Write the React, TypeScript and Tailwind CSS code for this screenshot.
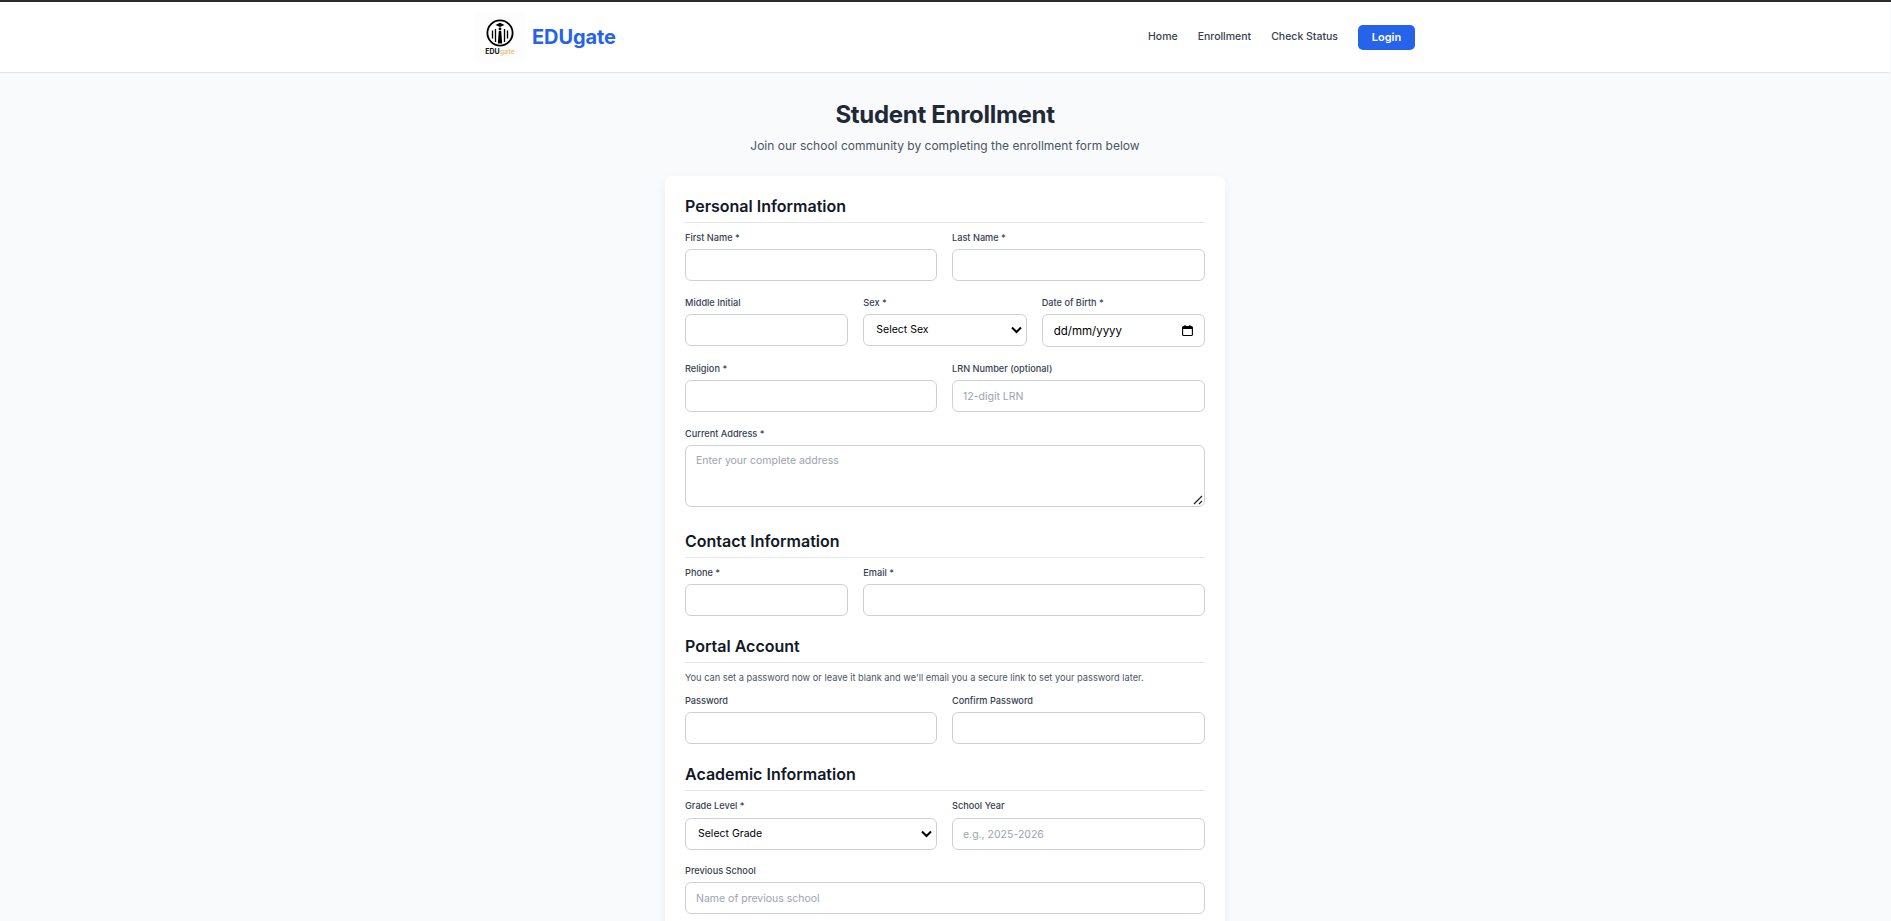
import type { ReactNode } from "react";

const fieldClass =
  "block w-full h-[32px] rounded-[6px] border border-[#cdd0d8] bg-white px-[10px] text-[10.500px] text-black placeholder:text-[#9ca3af] outline-none";

function Logo() {
  return (
    <div className="w-[50px] h-[50px] flex flex-col items-center justify-center bg-[#fdfdfd]">
      <svg width="28" height="28" viewBox="0 0 28 28" fill="none">
        <circle cx="14" cy="14" r="12.600" stroke="#000" strokeWidth="1.800" />
        {/* cap */}
        <path d="M14 3.800 18.500 6 14 8 9.500 6Z" fill="#000" />
        {/* columns and figure */}
        <path d="M6.500 11.500v8M9.500 10v13M18.500 10v13M21.500 11.500v8" stroke="#000" strokeWidth="1.300" />
        <circle cx="14" cy="10" r="1.400" fill="#000" />
        <path d="M12.800 12h2.400l1 12.500h-4.400Z" fill="#000" />
      </svg>
      <div className="mt-[1px] text-[7px] leading-[8px] font-bold text-[#111]">
        EDU<span className="font-semibold text-[#e6c67a]">gate</span>
      </div>
    </div>
  );
}

function NavBar() {
  return (
    <nav className="h-[71px] bg-white border-b border-[#e5e7eb]">
      <div className="w-[940px] h-full mx-auto flex items-center justify-between">
        <div className="flex items-center gap-[7px]">
          <Logo />
          <span className="text-[20px] font-bold tracking-[-0.1px] text-[#2563eb]">EDUgate</span>
        </div>
        <div className="flex items-center gap-[20px] text-[10.500px] font-medium text-[#374151]">
          <a>Home</a>
          <a>Enrollment</a>
          <a>Check Status</a>
          <button className="w-[57px] h-[25px] rounded-[5px] bg-[#2563eb] text-white text-[11px] font-semibold">
            Login
          </button>
        </div>
      </div>
    </nav>
  );
}

function Section({ title, children }: { title: string; children: ReactNode }) {
  return (
    <section className="mb-[18px]">
      <h2 className="h-[29px] pb-[4px] mb-[7px] border-b border-[#e5e7eb] text-[16px] leading-[25px] font-semibold text-[#111827]">
        {title}
      </h2>
      {children}
    </section>
  );
}

function Field({ label, children, className = "" }: { label: string; children: ReactNode; className?: string }) {
  return (
    <div className={className}>
      <label className="block mb-[3px] text-[9.200px] leading-[16px] font-medium text-[#374151]">{label}</label>
      {children}
    </div>
  );
}

function TextField({ label, placeholder, type = "text" }: { label: string; placeholder?: string; type?: string }) {
  return (
    <Field label={label}>
      <input type={type} placeholder={placeholder} className={fieldClass} />
    </Field>
  );
}

function SelectField({ label, option }: { label: string; option: string }) {
  return (
    <Field label={label}>
      <div className="relative">
        <select className={`${fieldClass} appearance-none pl-[12px]`}>
          <option>{option}</option>
        </select>
        <svg
          className="absolute right-[5px] top-[12px] pointer-events-none"
          width="11"
          height="8"
          viewBox="0 0 11 8"
          fill="none"
        >
          <path d="M1 1.500 5.500 6 10 1.500" stroke="#000" strokeWidth="2" />
        </svg>
      </div>
    </Field>
  );
}

function DateField({ label }: { label: string }) {
  return (
    <Field label={label}>
      <div className="relative">
        <input
          type="text"
          defaultValue="dd/mm/yyyy"
          className="block w-full h-[33px] rounded-[6px] border border-[#cdd0d8] bg-white pl-[11px] pr-[10px] text-[11.500px] text-black outline-none"
        />
        <svg
          className="absolute right-[12px] top-[11px] pointer-events-none"
          width="11"
          height="11"
          viewBox="0 0 11 11"
          fill="none"
        >
          <path d="M3 0v2M8 0v2" stroke="#000" strokeWidth="1.100" />
          <rect x=".6" y="1.500" width="9.800" height="9" rx="1" stroke="#000" strokeWidth="1.100" />
          <path d="M1 2h9v2H1Z" fill="#000" />
        </svg>
      </div>
    </Field>
  );
}

export default function App() {
  return (
    <div className="h-screen overflow-hidden pr-[1px] bg-[#f8fafc] border-t-2 border-[#2b2b30] font-['Inter',sans-serif]">
      <NavBar />
      <main className="pt-[26px]">
        <h1 className="text-center text-[24px] leading-[32px] font-bold tracking-[-0.3px] text-[#1f2937]">
          Student Enrollment
        </h1>
        <p className="mt-[5px] mb-[20px] text-center text-[12px] leading-[20px] text-[#4b5563]">
          Join our school community by completing the enrollment form below
        </p>

        <form className="w-[560px] mx-auto bg-white rounded-[8px] shadow-[0_4px_12px_rgba(0,0,0,0.05)] px-[20px] pt-[18px] pb-[20px]">
          <Section title="Personal Information">
            <div className="grid grid-cols-[252px_1fr] gap-x-[15px]">
              <TextField label="First Name *" />
              <TextField label="Last Name *" />
            </div>
            <div className="grid grid-cols-3 gap-x-[15px] mt-[14px]">
              <TextField label="Middle Initial" />
              <SelectField label="Sex *" option="Select Sex" />
              <DateField label="Date of Birth *" />
            </div>
            <div className="grid grid-cols-[252px_1fr] gap-x-[15px] mt-[14px]">
              <TextField label="Religion *" />
              <TextField label="LRN Number (optional)" placeholder="12-digit LRN" />
            </div>
            <div className="mt-[14px] pb-[4px]">
              <Field label="Current Address *">
                <div className="relative">
                  <textarea
                    placeholder="Enter your complete address"
                    className="block w-full h-[62px] resize-none rounded-[6px] border border-[#cdd0d8] bg-white px-[10px] py-[7px] text-[10.500px] placeholder:text-[#9ca3af] outline-none"
                  />
                  <svg
                    className="absolute right-[2px] bottom-[2px] pointer-events-none"
                    width="10"
                    height="10"
                    viewBox="0 0 10 10"
                    fill="none"
                  >
                    <path d="M1 9 9 1M6 9l3-3" stroke="#222" strokeWidth="1.200" />
                  </svg>
                </div>
              </Field>
            </div>
          </Section>

          <Section title="Contact Information">
            <div className="grid grid-cols-3 gap-x-[15px]">
              <TextField label="Phone *" type="tel" />
              <Field label="Email *" className="col-span-2">
                <input type="email" className={fieldClass} />
              </Field>
            </div>
          </Section>

          <Section title="Portal Account">
            <p className="mb-[7px] text-[9.250px] leading-[16px] text-[#4b5563]">
              You can set a password now or leave it blank and we'll email you a secure link to set your password later.
            </p>
            <div className="grid grid-cols-[252px_1fr] gap-x-[15px]">
              <TextField label="Password" type="password" />
              <TextField label="Confirm Password" type="password" />
            </div>
          </Section>

          <Section title="Academic Information">
            <div className="grid grid-cols-[252px_1fr] gap-x-[15px] [&_label]:mb-[4px]">
              <SelectField label="Grade Level *" option="Select Grade" />
              <TextField label="School Year" placeholder="e.g., 2025-2026" />
            </div>
            <div className="mt-[13px]">
              <TextField label="Previous School" placeholder="Name of previous school" />
            </div>
          </Section>
        </form>
      </main>
    </div>
  );
}
